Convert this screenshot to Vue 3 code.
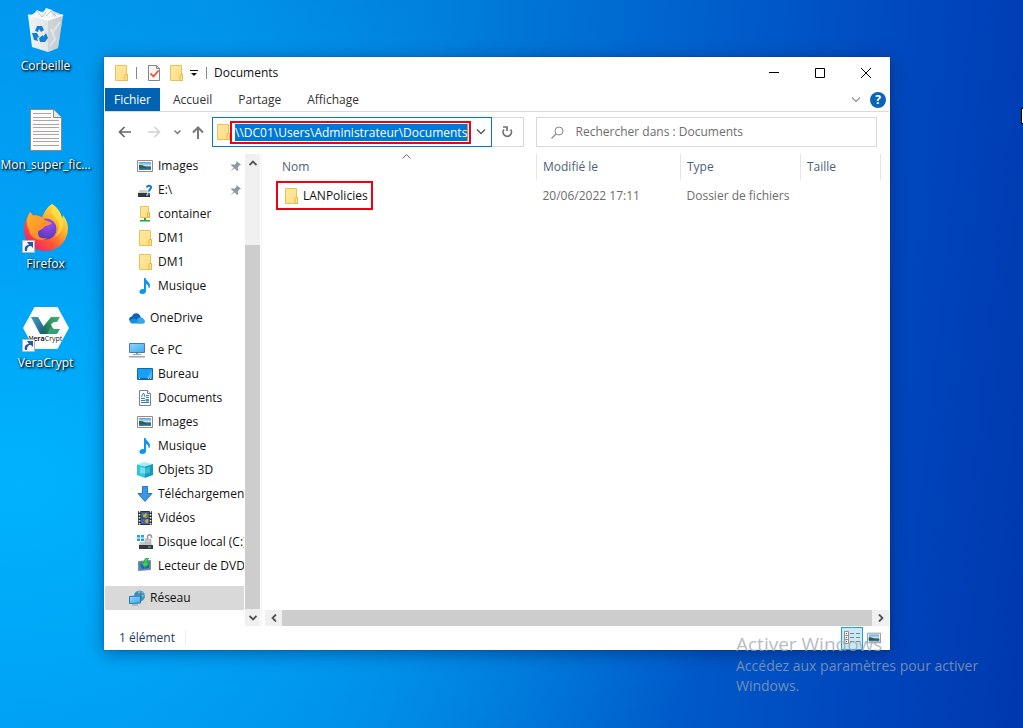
<script setup>
const desktopIcons = [
  { label: 'Corbeille', icon: 'i-bin' },
  { label: 'Mon_super_fic...', icon: 'i-text' },
  { label: 'Firefox', icon: 'i-firefox', shortcut: true },
  { label: 'VeraCrypt', icon: 'i-vera', shortcut: true },
]

const tree = [
  [
    { label: 'Images', icon: 'i-images', sub: true, pin: true },
    { label: 'E:\\', icon: 'i-drive', sub: true, pin: true },
    { label: 'container', icon: 'i-share', sub: true },
    { label: 'DM1', icon: 'i-folder', sub: true },
    { label: 'DM1', icon: 'i-folder', sub: true },
    { label: 'Musique', icon: 'i-music', sub: true },
  ],
  [{ label: 'OneDrive', icon: 'i-cloud' }],
  [
    { label: 'Ce PC', icon: 'i-pc' },
    { label: 'Bureau', icon: 'i-desk', sub: true },
    { label: 'Documents', icon: 'i-docs', sub: true },
    { label: 'Images', icon: 'i-images', sub: true },
    { label: 'Musique', icon: 'i-music', sub: true },
    { label: 'Objets 3D', icon: 'i-cube', sub: true },
    { label: 'Téléchargements', icon: 'i-down', sub: true },
    { label: 'Vidéos', icon: 'i-video', sub: true },
    { label: 'Disque local (C:)', icon: 'i-disk', sub: true },
    { label: 'Lecteur de DVD (', icon: 'i-dvd', sub: true },
  ],
  [{ label: 'Réseau', icon: 'i-net', active: true }],
]

const tabs = ['Accueil', 'Partage', 'Affichage']
const files = [{ name: 'LANPolicies', date: '20/06/2022 17:11', type: 'Dossier de fichiers', size: '' }]
const path = '\\\\DC01\\Users\\Administrateur\\Documents'
</script>

<template>
  <main class="desktop">
    <svg class="sprite" aria-hidden="true">
      <defs>
        <linearGradient id="g-fold" x1="0" y1="0" x2="1" y2="1"><stop offset="0" stop-color="#ffe9a2" /><stop offset="1" stop-color="#ffdc80" /></linearGradient>
        <linearGradient id="g-sky" x1="0" y1="0" x2="0" y2="1"><stop offset="0" stop-color="#5b9be0" /><stop offset=".5" stop-color="#d5ecf7" /><stop offset=".6" stop-color="#3c6e70" /><stop offset="1" stop-color="#3b84b8" /></linearGradient>
        <linearGradient id="g-scr" x1="0" y1="0" x2="1" y2="1"><stop offset="0" stop-color="#8ed8ff" /><stop offset="1" stop-color="#3aa9ee" /></linearGradient>
        <linearGradient id="g-ff" x1=".9" y1=".1" x2=".2" y2=".95"><stop offset="0" stop-color="#fff04a" /><stop offset=".35" stop-color="#ffb02a" /><stop offset=".65" stop-color="#ff5a35" /><stop offset="1" stop-color="#f0206a" /></linearGradient>
        <linearGradient id="g-ff2" x1="0" y1="0" x2="1" y2="1"><stop offset="0" stop-color="#ffb32c" /><stop offset="1" stop-color="#ff7a28" /></linearGradient>
        <radialGradient id="g-ffp" cx=".6" cy=".25" r=".8"><stop offset="0" stop-color="#a04cf5" /><stop offset="1" stop-color="#5037b5" /></radialGradient>
        <linearGradient id="g-bin" x1="0" y1="0" x2="1" y2="0"><stop offset="0" stop-color="#f2f5f7" /><stop offset=".65" stop-color="#dfe3e7" /><stop offset="1" stop-color="#b9c0c6" /></linearGradient>
        <linearGradient id="g-v" x1="0" y1="0" x2="1" y2="1"><stop offset="0" stop-color="#3fa0b8" /><stop offset="1" stop-color="#1d4f91" /></linearGradient>
        <linearGradient id="g-c" x1="1" y1="0" x2="0" y2="1"><stop offset="0" stop-color="#48b66c" /><stop offset="1" stop-color="#0d6157" /></linearGradient>
      </defs>
      <symbol id="i-folder" viewBox="0 0 16 16">
        <path d="M2.500.5h11v9h1v6h-12z" fill="url(#g-fold)" stroke="#e9c25a" />
        <path d="M12 15v-4.500l.5-1h2v6h-2.500z" fill="#ffe596" stroke="#e3b948" />
      </symbol>
      <symbol id="i-share" viewBox="0 0 16 16">
        <path d="M3.500.500h8v6h1v5h-9z" fill="url(#g-fold)" stroke="#e9c25a" />
        <path d="M10.500 11V7h2v4.500z" fill="#ffe596" stroke="#e0b23c" />
        <path d="M7 12h2v2h4v1.500H3V14h4z" fill="#23a63c" />
      </symbol>
      <symbol id="i-images" viewBox="0 0 16 16">
        <path d="M.5 2.500h15v11H.5z" fill="#fff" stroke="#8d8d8d" />
        <path d="M2 4h12v8H2z" fill="url(#g-sky)" />
        <path d="M2 7c3 0 5 .5 7 2l5 .5v1H2z" fill="#2f5c50" />
      </symbol>
      <symbol id="i-drive" viewBox="0 0 16 16">
        <path d="M3 8h9l2 3H1z" fill="#c9cccf" /><path d="M1 11h12v4H1z" fill="#34383c" /><path d="M9 13h2" stroke="#d8dcdf" />
        <path d="M10 5.500c0-2.500 4-2.500 4 0 0 2-2 1.500-2 4M12 10.500v2" fill="none" stroke="#fff" stroke-width="3.500" />
        <path d="M10 5.500c0-2.500 4-2.500 4 0 0 2-2 1.500-2 4M12 11v2" fill="none" stroke="#1a78c8" stroke-width="2" />
      </symbol>
      <symbol id="i-music" viewBox="0 0 16 16">
        <path d="M7 0h1.500c.5 3 4.500 4 4.500 7.500 0 1.500-.7 2.500-1.500 3 .6-2.800-1-4-2.500-4.500v7c0 1.800-1.500 3-3.500 3C3.500 16 2.500 15 2.500 13.700c0-2 2.500-3.200 4.500-2.500z" fill="#0a95ee" />
      </symbol>
      <symbol id="i-cloud" viewBox="0 0 16 16">
        <path d="M3 12C-.7 12-1 7 3 6.500c1-3.500 6-4.500 8-1l1 2.500-4 4z" fill="#0a63ba" />
        <path d="M1 11c1-3 5-3.500 7-1 1.500-3 6-3 7 .5.300 1.800-.5 3-2 3H3c-1 0-2-1-2-2.500z" fill="#1a8fe0" />
        <path d="M8 9.500C10 6 14 7 14.500 9c2 1 2 4.500-.5 4.500H9z" fill="#35a8ea" />
      </symbol>
      <symbol id="i-pc" viewBox="0 0 16 16">
        <path d="M.5 1.500h15v9H.5z" fill="url(#g-scr)" stroke="#4a7c9d" /><path d="M7 11h2v1.500H7z" fill="#87929a" /><path d="M4 12h8v1H4zM0 14h16v1.500H0z" fill="#9ba9b2" />
      </symbol>
      <symbol id="i-desk" viewBox="0 0 16 16">
        <path d="M.5 2.500h15v11H.5z" fill="#1b9ff2" stroke="#0c69ad" /><path d="M9 13l6-9v9z" fill="#48b5f7" /><path d="M1 12h14v1.500H1z" fill="#0c69ad" /><path d="M2 12.500h1M11 12.500h1M13 12.500h1" stroke="#fff" />
      </symbol>
      <symbol id="i-docs" viewBox="0 0 16 16">
        <path d="M2.500.5h8l3 3v12h-11z" fill="#fff" stroke="#808080" /><path d="M10.500.5v3h3" fill="#eee" stroke="#808080" />
        <path d="M4.500 7L6 3.500h1L8 7M4 8.500h4M4 10.500h4M4 12.500h8M9 5.500h3M9 7.500h3" fill="none" stroke="#2b86bf" /><path d="M8.500 9h3.500v2.500H8.500z" fill="#5b8fa0" />
      </symbol>
      <symbol id="i-cube" viewBox="0 0 16 16">
        <path d="M0 2.500L7 0l9 2-8 2.500z" fill="#a5edf4" /><path d="M0 2.500l8 2V16l-8-3z" fill="#35c4dc" /><path d="M8 4.500L16 2v11l-8 3z" fill="#149bbb" /><path d="M3 5l5 1v6l-5-1z" fill="#74dfeb" /><path d="M8 6l5-1.500v6L8 12z" fill="#36bdd3" />
      </symbol>
      <symbol id="i-down" viewBox="0 0 16 16"><path d="M5.500.5h5v7h4.500L8 15.500 1 7.500h4.500z" fill="#3c96e6" stroke="#2479c6" /></symbol>
      <symbol id="i-video" viewBox="0 0 16 16">
        <path d="M1 1h14v14H1z" fill="#303030" /><path d="M4 2h8v6H4z" fill="#2d5dab" /><path d="M4 8.500h8V14H4z" fill="#3b69b5" />
        <path d="M6 7V5l3-2 2 2-1 3zM8 10l3-1v4H9z" fill="#dba92e" /><path d="M5 3h2v2H5zM9 5h2v2H9z" fill="#5a8f3b" />
        <path d="M2.500 1v14M13.500 1v14" stroke="#fff" stroke-width="1.500" stroke-dasharray="1.500 1.500" />
      </symbol>
      <symbol id="i-disk" viewBox="0 0 16 16">
        <path d="M0 1h3v2.500H0zM4 1h3v2.500H4zM0 4.500h3V7H0zM4 4.500h3V7H4z" fill="#18a7e0" />
        <path d="M3 8h11l1 3H2z" fill="#c4c7ca" /><path d="M2 11h14v4H2z" fill="#34383c" /><path d="M11 13h3" stroke="#75e07b" />
        <path d="M10.500 5V3c0-3 4-3 4 0v1" fill="none" stroke="#9a9a9a" stroke-width="1.500" /><path d="M8 5h6v4H8z" fill="#c9c9c9" stroke="#999" stroke-width=".5" />
      </symbol>
      <symbol id="i-dvd" viewBox="0 0 16 16">
        <path d="M1.500 3.500l12-1v9l-12 1z" fill="#4a87cc" stroke="#7d8c98" /><path d="M3 6l9-1v5l-7 1z" fill="#2a62aa" />
        <path d="M9 0l3 0c-2 2-2 3-2 5h3L8 9.500 4 5h3c0-2 1-4 2-5z" fill="#3fcf55" stroke="#1d953a" stroke-width=".7" />
      </symbol>
      <symbol id="i-net" viewBox="0 0 16 16">
        <circle cx="10.500" cy="6" r="5.500" fill="#4a92b8" /><path d="M10 .5c3 0 5 2 6 4l-3 3-2-3-3 1z" fill="#7dbbd2" /><path d="M12 1v10M6 4h9" stroke="#2f779e" fill="none" />
        <path d="M.5 6.500l11-.5v7l-11 .5z" fill="url(#g-scr)" stroke="#2879ae" /><path d="M3 14.500h6v1H3z" fill="#8b979f" />
      </symbol>
      <symbol id="i-pin" viewBox="0 0 12 12"><path d="M7 0l5 4-2 1-1.500 2.500.5 2.500-1.500 1L5 8l-4.500 3.500L4 7 1 4.500l1-1 3 .5L7 2z" fill="#8d9aa4" /></symbol>
      <symbol id="i-bin" viewBox="0 0 48 48">
        <path d="M8 9l7-3 16-1 10 4-2 5-13 2-17-4z" fill="#d3d8dc" />
        <path d="M11 9l4-5 6 3 3-5 6 2 2 4 5 1-2 6H13z" fill="#f5f7f8" /><path d="M15 5l5 6 4-5M24 10l5-5 4 6M32 8l5 5" fill="none" stroke="#bcc3ca" />
        <path d="M6 9l20 5 15-5-5 33-10 4-16-5z" fill="url(#g-bin)" /><path d="M26 14l15-5-5 33-10 4z" fill="#c8ced3" opacity=".75" />
        <path d="M6 9l20 5 15-5" fill="none" stroke="#fafbfc" stroke-width="1.500" /><path d="M29 23l4 10-5 7M38 16l-8 11" stroke="#e1e5e8" stroke-width="2" fill="none" />
        <path d="M13 25l2-5 5 0 2 4-3 2-2-3-1 3zM10 27l5 0 2 4-2 1 1 3-4-1zM18 36l-1-4 4-3v2l3-4 2 5-3 4z" fill="#1180d4" />
      </symbol>
      <symbol id="i-text" viewBox="0 0 48 48">
        <path d="M8.500 4.500h23l8 8v33h-31z" fill="#fbfbfb" stroke="#8c8783" /><path d="M31.500 4.500v8h8" fill="#e8e8e8" stroke="#8c8783" />
        <path d="M11 8.500h18M11 12.500h18M11 15.500h26M11 19.500h26M11 22.500h26M11 26.500h26M11 29.500h26M11 33.500h26M11 36.500h26M11 40.500h26" stroke="#aaa6a3" />
      </symbol>
      <symbol id="i-firefox" viewBox="0 0 48 48">
        <path d="M30 0c8 6 9 11 10 14 1-1 1-3 1-3 5 7 6 13 4 20-3 10-12 16-21 16C11 47 2 38 2 25c0-6 2-10 5-14l1-3 3 3c4 0 7 1 9 3 2-6 5-11 10-14z" fill="url(#g-ff)" />
        <circle cx="24" cy="25" r="10.500" fill="url(#g-ffp)" />
        <path d="M8 8l3 4c4-1 9 0 12 4l7 3c-2 3-7 2-8 4-1 3-6 2-6 6 0 5 5 6 9 5-7 5-17 0-18-8C3 18 5 13 8 8z" fill="url(#g-ff2)" />
        <path d="M30 0c-3 6 1 10 5 15 4 6 2 13-2 18 9-6 9-14 7-19-1-4-3-10-10-14z" fill="#ffe047" opacity=".8" />
      </symbol>
      <symbol id="i-vera" viewBox="0 0 48 48">
        <path d="M12.500 4h23L47 25 35.500 46h-23L1 25z" fill="#fff" />
        <path d="M9 14h7l6 10 3 7h-7z" fill="url(#g-v)" /><path d="M38 14h-9l-9 11-1 6h8l3-7-1-3 3-2h3z" fill="url(#g-c)" />
        <path d="M29 23l3 3h6l-3 5H25z" fill="#35a06f" />
      </symbol>
      <symbol id="i-arrow" viewBox="0 0 13 13"><path d="M.5.5h12v12H.5z" fill="#f7f7f7" stroke="#b5b5b5" /><path d="M3 11c-1-4 1-6 4-6L5 2h6v6L9 6C6 6 5 8 5 11z" fill="#2458a6" /></symbol>
    </svg>

    <nav class="shortcuts" aria-label="Bureau">
      <button v-for="d in desktopIcons" :key="d.label" class="shortcut">
        <svg class="big"><use :href="'#' + d.icon" /></svg>
        <span v-if="d.icon === 'i-vera'" class="brand"><b>Vera</b>Crypt</span>
        <svg v-if="d.shortcut" class="badge"><use href="#i-arrow" /></svg>
        <span>{{ d.label }}</span>
      </button>
    </nav>

    <section class="window" aria-label="Documents">
      <header class="titlebar">
        <svg class="ico"><use href="#i-folder" /></svg>
        <i class="sep"></i>
        <button class="quick" aria-label="Propriétés">
          <svg class="ico" viewBox="0 0 16 16"><path d="M2.500.5h8l3 3v12h-11z" fill="#f7f7f7" stroke="#858585" /><path d="M10.500.5v3h3" fill="none" stroke="#858585" /><path d="M4.500 8.500l3 3 5-6" fill="none" stroke="#e8501c" stroke-width="1.700" /></svg>
        </button>
        <button class="quick" aria-label="Nouveau dossier"><svg class="ico"><use href="#i-folder" /></svg></button>
        <button class="quick more" aria-label="Personnaliser"><svg width="8" height="8" viewBox="0 0 8 8"><path d="M0 1.500h8" stroke="#111" /><path d="M1 4h6L4 7z" fill="#111" /></svg></button>
        <i class="sep second"></i>
        <h1>Documents</h1>
        <div class="controls">
          <button aria-label="Réduire"><svg width="10" height="10"><path d="M0 4.500h10" stroke="#000" /></svg></button>
          <button aria-label="Agrandir"><svg width="10" height="10"><path d="M.5.5h9v9h-9z" fill="none" stroke="#000" /></svg></button>
          <button aria-label="Fermer"><svg width="10" height="10"><path d="M0 0l10 10M10 0L0 10" stroke="#000" /></svg></button>
        </div>
      </header>

      <div class="ribbon">
        <button class="file">Fichier</button>
        <button v-for="t in tabs" :key="t" class="tab">{{ t }}</button>
        <button class="expand" aria-label="Développer"><svg width="10" height="6"><path d="M1 .5l4 4 4-4" fill="none" stroke="#9a9a9a" stroke-width="1.300" /></svg></button>
        <button class="help" aria-label="Aide">?</button>
      </div>

      <div class="toolbar">
        <button class="arrow back" aria-label="Précédent"><svg width="13" height="12"><path d="M13 6H1.500M6.500 1l-5 5 5 5" fill="none" stroke="#666" stroke-width="1.700" /></svg></button>
        <button class="arrow fwd" aria-label="Suivant"><svg width="13" height="12"><path d="M0 6h11.500M6.500 1l5 5-5 5" fill="none" stroke="#d2d2d2" stroke-width="1.500" /></svg></button>
        <button class="arrow recent" aria-label="Récents"><svg width="7" height="5"><path d="M.5.500l3 3 3-3" fill="none" stroke="#777" stroke-width="1.500" /></svg></button>
        <button class="arrow up" aria-label="Monter"><svg width="12" height="13"><path d="M6 13V1.500M1 6.500l5-5 5 5" fill="none" stroke="#777" stroke-width="2" /></svg></button>
        <div class="address">
          <svg class="ico"><use href="#i-folder" /></svg>
          <label class="mark"><input :value="path" aria-label="Adresse" size="34" /></label>
          <button class="drop" aria-label="Historique"><svg width="10" height="6"><path d="M1 .500l4 4 4-4" fill="none" stroke="#555" stroke-width="1.300" /></svg></button>
        </div>
        <button class="refresh" aria-label="Actualiser"><svg width="12" height="12" viewBox="0 0 12 12"><path d="M9.500 3.500A4.200 4.200 0 1 1 3 3.500" fill="none" stroke="#707070" stroke-width="1.700" /><path d="M2 1h4v4" fill="none" stroke="#707070" stroke-width="1.700" /></svg></button>
        <label class="search">
          <svg width="13" height="13"><circle cx="8" cy="5" r="4" fill="none" stroke="#8a8a8a" /><path d="M5 8L.5 12.500" stroke="#8a8a8a" stroke-width="1.300" /></svg>
          <input type="text" placeholder="Rechercher dans : Documents" aria-label="Rechercher" />
        </label>
      </div>

      <div class="body">
        <nav class="tree" aria-label="Volet de navigation">
          <ul v-for="(group, g) in tree" :key="g">
            <li v-for="(item, i) in group" :key="i">
              <a href="#" :class="{ sub: item.sub, active: item.active }">
                <svg class="ico"><use :href="'#' + item.icon" /></svg>
                <span>{{ item.label }}</span>
                <svg v-if="item.pin" class="pin"><use href="#i-pin" /></svg>
              </a>
            </li>
          </ul>
        </nav>
        <div class="vbar">
          <button aria-label="Défiler vers le haut"><svg width="8" height="6"><path d="M.5 5L4 1.500 7.500 5" fill="none" stroke="#505050" stroke-width="1.800" /></svg></button>
          <div class="vtrack"><div class="vthumb"></div></div>
          <button aria-label="Défiler vers le bas"><svg width="8" height="6"><path d="M.5 1L4 4.500 7.500 1" fill="none" stroke="#505050" stroke-width="1.800" /></svg></button>
        </div>
        <div class="pane">
          <table>
            <thead>
              <tr>
                <th class="c-name">Nom<svg class="sort" width="9" height="5"><path d="M.500 4.500l4-4 4 4" fill="none" stroke="#6a6a6a" /></svg></th>
                <th class="c-date">Modifié le</th>
                <th class="c-type">Type</th>
                <th class="c-size">Taille</th>
              </tr>
            </thead>
            <tbody>
              <tr v-for="f in files" :key="f.name">
                <td class="name"><span class="boxed"><svg class="ico"><use href="#i-folder" /></svg>{{ f.name }}</span></td>
                <td>{{ f.date }}</td>
                <td>{{ f.type }}</td>
                <td>{{ f.size }}</td>
              </tr>
            </tbody>
          </table>
          <div class="hbar">
            <button aria-label="Défiler à gauche"><svg width="6" height="8"><path d="M5 .5L1.500 4 5 7.500" fill="none" stroke="#505050" stroke-width="1.800" /></svg></button>
            <div class="hthumb"></div>
            <button aria-label="Défiler à droite"><svg width="6" height="8"><path d="M1 .5L4.500 4 1 7.500" fill="none" stroke="#505050" stroke-width="1.800" /></svg></button>
          </div>
        </div>
      </div>

      <footer class="status">
        <span class="count">1 élément</span>
        <button class="view on" aria-label="Détails">
          <svg width="16" height="14"><path d="M.5.5h4v12h-4zM.5 4.500h4M.5 8.500h4" fill="#fff" stroke="#9a8f88" /><path d="M2 2.500h1M2 6.500h1M2 10.500h1" stroke="#444" /><path d="M6 2.500h4M12 2.500h4M6 6.500h4M12 6.500h4M6 10.500h4M12 10.500h4" stroke="#78838a" /></svg>
        </button>
        <button class="view" aria-label="Grandes icônes"><svg width="14" height="14"><use href="#i-images" /></svg></button>
      </footer>
    </section>

    <aside class="watermark">
      <p class="big-line">Activer Windows</p>
      <p>Accédez aux paramètres pour activer Windows.</p>
    </aside>
    <i class="edge"></i>
  </main>
</template>

<style>
body {
  margin: 0;
}
</style>

<style scoped>
.desktop {
  position: relative;
  height: 100vh;
  overflow: hidden;
  font: 12px/16px "Open Sans", "Noto Sans", sans-serif;
  color: #111;
  background:
    radial-gradient(ellipse 720px 560px at 2% 66%, rgba(0, 182, 255, 0.9), rgba(0, 172, 255, 0.55) 45%, rgba(0, 150, 240, 0) 100%),
    linear-gradient(96deg, #0094ec 0%, #0090e6 20%, #0080dc 40%, #0060cc 64%, #0047be 84%, #0038ae 100%);
}
.sprite {
  position: absolute;
  width: 0;
  height: 0;
}
button {
  margin: 0;
  padding: 0;
  border: 0;
  background: none;
  font: inherit;
  color: inherit;
  display: flex;
  align-items: center;
  justify-content: center;
}
input {
  border: 0;
  padding: 0;
  font: inherit;
  outline: 0;
}
svg {
  flex: none;
}
.ico {
  width: 16px;
  height: 16px;
}

.shortcuts {
  display: flex;
  flex-direction: column;
  gap: 31px;
  width: 91px;
  padding-top: 6px;
}
.shortcut {
  position: relative;
  flex-direction: column;
  gap: 4px;
  color: #fff;
  text-shadow: 1px 1px 2px #000, 1px 1px 3px rgba(0, 0, 0, 0.8);
}
.shortcut span {
  white-space: nowrap;
}
.big {
  width: 48px;
  height: 48px;
}
.brand {
  position: absolute;
  top: 31px;
  font-size: 7px;
  line-height: 9px;
  color: #222;
  text-shadow: none;
}
.badge {
  position: absolute;
  left: 22px;
  top: 36px;
  width: 13px;
  height: 13px;
}

.window {
  position: absolute;
  inset: 57px 133px 78px 104px;
  box-sizing: border-box;
  padding: 0 1px;
  display: flex;
  flex-direction: column;
  background: #fff;
  box-shadow: 0 0 1px rgba(0, 30, 80, 0.6), 0 3px 16px rgba(0, 20, 70, 0.45);
}
.titlebar {
  display: flex;
  align-items: center;
  height: 31px;
  padding-left: 8px;
}
.sep {
  width: 1px;
  height: 12px;
  margin: 0 9px 0 7px;
  background: #888;
}
.quick {
  margin-right: 6px;
}
.more {
  margin: 0 3px 0 0;
}
.second {
  margin: 0 7px 0 5px;
}
h1 {
  margin: 0;
  font: inherit;
}
.controls {
  display: flex;
  margin-left: auto;
}
.controls button {
  width: 46px;
  height: 30px;
}
.ribbon {
  display: flex;
  align-items: center;
  height: 23px;
  border-bottom: 1px solid #dadbdc;
}
.file,
.tab {
  height: 23px;
  padding: 0 13px;
  color: #333;
}
.file {
  padding: 0 9px;
  background: #0063b1;
  color: #fff;
}
.expand {
  margin-left: auto;
}
.help {
  width: 16px;
  height: 16px;
  margin: 0 3px 0 9px;
  border-radius: 50%;
  background: #0a64b8;
  color: #fff;
  font-weight: 700;
}
.toolbar {
  display: flex;
  align-items: center;
  height: 40px;
  padding: 0 12px 0 13px;
}
.fwd {
  margin-left: 17px;
}
.recent {
  margin-left: 13px;
}
.up {
  margin: 0 8px 0 11px;
}
.address {
  flex: 276 1 0;
  min-width: 0;
  height: 30px;
  box-sizing: border-box;
  display: flex;
  align-items: center;
  border: 1px solid #0078d7;
  padding-left: 2px;
}
.mark {
  z-index: 1;
  display: flex;
  margin-left: -1px;
  padding: 1px 1px 1px 3px;
  border: 2px solid #f00014;
  background: #fff;
}
.mark input {
  field-sizing: content;
  height: 17px;
  background: #0078d7;
  border-right: 1px solid #f08a3c;
  color: #fff;
}
.drop {
  flex: 1;
  height: 28px;
}
.refresh {
  width: 32px;
  height: 30px;
  border: 1px solid #d9d9d9;
  border-left: 0;
}
.search {
  flex: 326 1 0;
  height: 30px;
  box-sizing: border-box;
  margin-left: 12px;
  display: flex;
  align-items: center;
  gap: 12px;
  padding-left: 14px;
  border: 1px solid #d9d9d9;
}
.search input {
  flex: 1;
  min-width: 0;
}
.search input::placeholder {
  color: #6d6d6d;
  opacity: 1;
}
.body {
  flex: 1;
  min-height: 0;
  display: flex;
  padding-top: 2px;
}
.tree {
  width: 140px;
  overflow: hidden;
}
.tree ul {
  margin: 0 0 8px;
  padding: 0;
  list-style: none;
}
.tree a {
  display: flex;
  align-items: center;
  gap: 5px;
  height: 24px;
  margin-right: 1px;
  padding-left: 24px;
  color: #111;
  text-decoration: none;
  white-space: nowrap;
  overflow: hidden;
}
.tree a.sub {
  padding-left: 32px;
}
.tree a.active {
  background: #d9d9d9;
}
.pin {
  width: 11px;
  height: 11px;
  margin: 0 3px 0 auto;
}
.vbar {
  width: 15px;
  display: flex;
  flex-direction: column;
  background: #f0f0f0;
}
.vbar button {
  height: 17px;
}
.vtrack {
  flex: 1;
  display: flex;
  flex-direction: column;
  justify-content: flex-end;
}
.vthumb {
  height: 83%;
  background: #cdcdcd;
}
.pane {
  flex: 1;
  min-width: 0;
  display: flex;
  flex-direction: column;
  justify-content: space-between;
  margin-left: 1px;
  border-left: 1px solid #f4f4f4;
}
table {
  border-collapse: collapse;
  table-layout: fixed;
  width: 619px;
  color: #6d6d6d;
}
th,
td {
  padding: 0 0 0 6px;
  font-weight: 400;
  text-align: left;
}
th {
  position: relative;
  height: 26px;
  color: #4c607a;
  border-right: 1px solid #e5e5e5;
}
td {
  padding-top: 1px;
}
th.c-name {
  padding-left: 20px;
}
.c-name {
  width: 254px;
}
.c-date {
  width: 137px;
}
.c-type {
  width: 113px;
}
.sort {
  position: absolute;
  left: 140px;
  top: 0;
}
td.name {
  padding-left: 14px;
}
.boxed {
  display: inline-flex;
  align-items: center;
  gap: 4px;
  box-sizing: border-box;
  height: 29px;
  padding: 0 3px 0 5px;
  border: 2px solid #f00014;
  color: #111;
}
.hbar {
  display: flex;
  height: 16px;
  margin-left: 3px;
  background: #f0f0f0;
}
.hbar button {
  width: 17px;
}
.hthumb {
  flex: 1;
  background: #cdcdcd;
}
.status {
  display: flex;
  align-items: center;
  height: 24px;
  padding: 0 4px 0 14px;
}
.count {
  margin-right: auto;
  padding-right: 10px;
  border-right: 1px solid #eee;
  color: #1e3c5f;
}
.view {
  width: 22px;
  height: 23px;
  box-sizing: border-box;
}
.on {
  background: #cbe8f6;
  border: 1px solid #26a0da;
}
.watermark {
  position: absolute;
  right: 27px;
  bottom: 32px;
  width: 260px;
  font-size: 14px;
  line-height: 20px;
  color: rgba(155, 165, 175, 0.75);
}
.watermark p {
  margin: 0;
}
.watermark .big-line {
  font-size: 19px;
  line-height: 24px;
}
.edge {
  position: absolute;
  right: 0;
  top: 108px;
  width: 1px;
  height: 14px;
  background: #fff;
  border: solid #000;
  border-width: 1px 0 1px 1px;
}
</style>
